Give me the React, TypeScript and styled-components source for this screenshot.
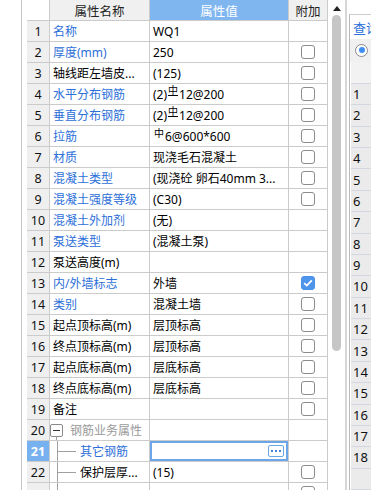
import React from 'react'
import styled, { createGlobalStyle, css } from 'styled-components'

const GRID = '#cbcbcb'
const LINK = '#2d6fd9'
const ACCENT = '#80b6f0'

const GlobalStyle = createGlobalStyle`
    html, body {
        margin: 0;
        padding: 0;
        background: #fff;
    }
    body {
        font-family: "Noto Sans", "Noto Sans CJK SC", sans-serif;
        font-size: 12px;
        color: #000;
        overflow: hidden;
    }
`

const Page = styled.div`
    display: flex;
    width: 371px;
    height: 490px;
    overflow: hidden;
    background: #fff;
`

const Gutter = styled.div`
    width: 21px;
    flex-shrink: 0;
    border-right: 1px solid #c8c8c8;
`

const MainPane = styled.div`
    margin-left: 5px;
    width: 301px;
    flex-shrink: 0;
    display: flex;
    flex-direction: column;
`

const TopBand = styled.div`
    height: 4px;
    background: #dadada;
`

const Grid = styled.div`
    display: grid;
    grid-template-columns: 23px 100px 139px 39px;
    grid-auto-rows: 21px;
`

const Cell = styled.div`
    box-sizing: border-box;
    border-right: 1px solid ${GRID};
    border-bottom: 1px solid ${GRID};
    display: flex;
    align-items: center;
    overflow: hidden;
    white-space: nowrap;
    position: relative;
`

const CornerCell = styled(Cell)`
    background: #fff;
`

const HeadCell = styled(Cell)<{ $accent?: boolean }>`
    justify-content: center;
    background: ${p => (p.$accent ? ACCENT : '#f0f0f0')};
    color: ${p => (p.$accent ? '#fff' : '#222')};
    font-size: 12.5px;
`

const NumCell = styled(Cell)<{ $active?: boolean }>`
    justify-content: center;
    background: ${p => (p.$active ? '#78b1ef' : '#efefef')};
    color: ${p => (p.$active ? '#fff' : '#111')};
    font-weight: ${p => (p.$active ? 700 : 400)};
    font-size: 12.5px;
`

const NameCell = styled(Cell)<{ $tone: 'link' | 'plain' | 'muted'; $tree?: boolean }>`
    padding-left: ${p => (p.$tree ? 0 : 3)}px;
    color: ${p => (p.$tone === 'link' ? LINK : p.$tone === 'muted' ? '#9a9a9a' : '#000')};
`

const ValueCell = styled(Cell)<{ $editing?: boolean }>`
    padding-left: 3px;
    ${p =>
        p.$editing &&
        css`
            box-shadow: inset 0 0 0 2px #6ca6e8;
            justify-content: flex-end;
            padding-right: 4px;
        `}
`

const AddCell = styled(Cell)`
    justify-content: center;
`

const CheckBox = styled.span<{ $on?: boolean }>`
    box-sizing: border-box;
    width: 14px;
    height: 14px;
    border-radius: 3px;
    border: 1px solid ${p => (p.$on ? '#4a91ea' : '#8c8c8c')};
    background: ${p => (p.$on ? '#4f95ec' : '#fff')};
    display: flex;
    align-items: center;
    justify-content: center;
`

const Rebar = styled.span<{ $bar?: boolean }>`
    display: inline-block;
    font-size: 10px;
    line-height: 9px;
    margin: 0 1px;
    transform: translateY(-3px);
    ${p => p.$bar && css`border-bottom: 1px solid #000;`}
`

const GroupBox = styled.span`
    box-sizing: border-box;
    width: 13px;
    height: 13px;
    border: 1px solid #8a8a8a;
    border-radius: 2px;
    margin-right: 7px;
    display: flex;
    align-items: center;
    justify-content: center;
    position: relative;
    &::before {
        content: '';
        width: 7px;
        height: 1px;
        background: #333;
    }
    &::after {
        content: '';
        position: absolute;
        left: 5px;
        top: 12px;
        width: 1px;
        height: 5px;
        background: #a0a0a0;
    }
`

const TreeGuide = styled.span`
    align-self: stretch;
    width: 27px;
    margin-left: 3px;
    flex-shrink: 0;
    position: relative;
    &::before {
        content: '';
        position: absolute;
        left: 4px;
        top: -1px;
        bottom: -1px;
        width: 1px;
        background: #a0a0a0;
    }
    &::after {
        content: '';
        position: absolute;
        left: 5px;
        top: 10px;
        width: 18px;
        height: 1px;
        background: #a0a0a0;
    }
`

const MoreButton = styled.span`
    box-sizing: border-box;
    width: 16px;
    height: 12px;
    border: 1px solid #6ca6e8;
    border-radius: 2px;
    display: flex;
    align-items: center;
    justify-content: center;
    gap: 2px;
`

const Dot = styled.span`
    width: 2px;
    height: 2px;
    background: #3f86de;
`

const ScrollTrack = styled.div`
    width: 17px;
    flex-shrink: 0;
    display: flex;
    flex-direction: column;
    align-items: center;
    padding-top: 6px;
    box-sizing: border-box;
`

const ScrollArrow = styled.span`
    width: 0;
    height: 0;
    border-left: 4px solid transparent;
    border-right: 4px solid transparent;
    border-bottom: 5px solid #222;
`

const ScrollThumb = styled.span`
    margin-top: 4px;
    width: 9px;
    height: 336px;
    border-radius: 5px;
    background: #c6c6c6;
`

const Divider = styled.div`
    width: 2px;
    flex-shrink: 0;
    background: #d6d6d6;
`

const SidePanel = styled.div`
    margin-left: 2px;
    margin-top: 14px;
    border-top: 1px solid #cdcdcd;
    border-left: 1px solid #b8b8b8;
    flex: 1;
    min-width: 0;
    display: flex;
    flex-direction: column;
`

const TabLabel = styled.div`
    height: 25px;
    padding-left: 3px;
    display: flex;
    align-items: center;
    color: ${LINK};
    font-size: 13px;
    white-space: nowrap;
`

const RadioRow = styled.div`
    height: 23px;
    background: #f0f0f0;
    padding-left: 5px;
    display: flex;
    align-items: center;
`

const Radio = styled.span`
    box-sizing: border-box;
    width: 13px;
    height: 13px;
    border-radius: 50%;
    border: 1px solid #8a8a8a;
    background: #fff;
    display: flex;
    align-items: center;
    justify-content: center;
    &::after {
        content: '';
        width: 6px;
        height: 6px;
        border-radius: 50%;
        background: #3d8ef0;
    }
`

const SideCell = styled.div<{ $head?: boolean }>`
    box-sizing: border-box;
    height: ${p => (p.$head ? 23 : 22)}px;
    margin-left: 1px;
    background: ${p => (p.$head ? '#f2f2f2' : '#ebebeb')};
    border-bottom: 1px solid #d3d7df;
    padding-left: 2px;
    display: flex;
    align-items: center;
    font-size: 13px;
    color: #111;
`

type Row = {
    name?: string
    tone: 'link' | 'plain' | 'muted'
    value?: React.ReactNode
    check?: 'on' | 'off'
    kind?: 'group' | 'child'
    editing?: boolean
    hideNum?: boolean
}

const rows: Row[] = [
    { name: '名称', tone: 'link', value: 'WQ1' },
    { name: '厚度(mm)', tone: 'link', value: '250', check: 'off' },
    { name: '轴线距左墙皮...', tone: 'plain', value: '(125)', check: 'off' },
    { name: '水平分布钢筋', tone: 'link', value: <>(2)<Rebar $bar>中</Rebar>12@200</>, check: 'off' },
    { name: '垂直分布钢筋', tone: 'link', value: <>(2)<Rebar $bar>中</Rebar>12@200</>, check: 'off' },
    { name: '拉筋', tone: 'link', value: <><Rebar>中</Rebar>6@600*600</>, check: 'off' },
    { name: '材质', tone: 'link', value: '现浇毛石混凝土', check: 'off' },
    { name: '混凝土类型', tone: 'link', value: '(现浇砼 卵石40mm 3...', check: 'off' },
    { name: '混凝土强度等级', tone: 'link', value: '(C30)', check: 'off' },
    { name: '混凝土外加剂', tone: 'link', value: '(无)' },
    { name: '泵送类型', tone: 'link', value: '(混凝土泵)' },
    { name: '泵送高度(m)', tone: 'plain' },
    { name: '内/外墙标志', tone: 'link', value: '外墙', check: 'on' },
    { name: '类别', tone: 'link', value: '混凝土墙', check: 'off' },
    { name: '起点顶标高(m)', tone: 'plain', value: '层顶标高', check: 'off' },
    { name: '终点顶标高(m)', tone: 'plain', value: '层顶标高', check: 'off' },
    { name: '起点底标高(m)', tone: 'plain', value: '层底标高', check: 'off' },
    { name: '终点底标高(m)', tone: 'plain', value: '层底标高', check: 'off' },
    { name: '备注', tone: 'plain', check: 'off' },
    { name: '钢筋业务属性', tone: 'muted', kind: 'group' },
    { name: '其它钢筋', tone: 'link', kind: 'child', editing: true },
    { name: '保护层厚...', tone: 'plain', kind: 'child', value: '(15)', check: 'off' },
    { tone: 'plain', kind: 'child', check: 'off', hideNum: true },
]

const CheckMark = () => (
    <svg width="10" height="8" viewBox="0 0 10 8">
        <path d="M1.2 4.2 L3.8 6.6 L8.8 1.4" fill="none" stroke="#fff" strokeWidth="1.8" />
    </svg>
)

export default function App() {
    return (
        <Page>
            <GlobalStyle />
            <Gutter />
            <MainPane>
                <TopBand />
                <Grid>
                    <CornerCell />
                    <HeadCell>属性名称</HeadCell>
                    <HeadCell $accent>属性值</HeadCell>
                    <HeadCell>附加</HeadCell>
                    {rows.map((r, i) => (
                        <React.Fragment key={i}>
                            <NumCell $active={r.editing}>{!r.hideNum && i + 1}</NumCell>
                            <NameCell $tone={r.tone} $tree={!!r.kind}>
                                {r.kind === 'group' && <GroupBox />}
                                {r.kind === 'child' && <TreeGuide />}
                                {r.name}
                            </NameCell>
                            <ValueCell $editing={r.editing}>
                                {r.editing ? (
                                    <MoreButton>
                                        <Dot />
                                        <Dot />
                                        <Dot />
                                    </MoreButton>
                                ) : (
                                    r.value
                                )}
                            </ValueCell>
                            <AddCell>
                                {r.check && <CheckBox $on={r.check === 'on'}>{r.check === 'on' && <CheckMark />}</CheckBox>}
                            </AddCell>
                        </React.Fragment>
                    ))}
                </Grid>
            </MainPane>
            <ScrollTrack>
                <ScrollArrow />
                <ScrollThumb />
            </ScrollTrack>
            <Divider />
            <SidePanel>
                <TabLabel>查询</TabLabel>
                <RadioRow>
                    <Radio />
                </RadioRow>
                <SideCell $head />
                {Array.from({ length: 19 }, (_, k) => (
                    <SideCell key={k}>{k < 18 ? k + 1 : ''}</SideCell>
                ))}
            </SidePanel>
        </Page>
    )
}
